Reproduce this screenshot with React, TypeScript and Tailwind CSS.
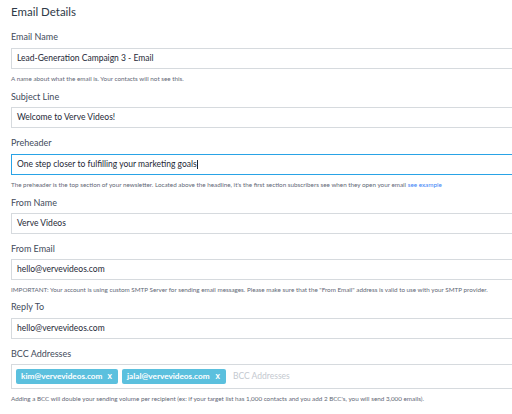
import React from "react";

const font = { fontFamily: "Lato, 'Open Sans', sans-serif" };

function Label({ children }: { children: React.ReactNode }) {
  return <div className="h-[12px] leading-[12px] text-[9px] text-[#3f4b5b] mb-[4.5px]">{children}</div>;
}

function Input({ value, active }: { value: string; active?: boolean }) {
  return (
    <div
      className={
        "h-[21px] w-[540px] flex items-center pl-[5px] text-[8.5px] text-[#1e2836] bg-white " +
        (active ? "border-[1.5px] border-[#29a3e6]" : "border border-[#d6dade]")
      }
    >
      {value}
      {active ? <span className="inline-block w-px h-[9px] bg-[#1e2836] ml-[0.5px]" /> : null}
    </div>
  );
}

function Help({ children }: { children: React.ReactNode }) {
  return <div className="mt-[6px] h-[8px] leading-[8px] text-[6.3px] text-[#5f6876] whitespace-nowrap">{children}</div>;
}

function Tag({ text, w }: { text: string; w: string }) {
  return (
    <div className={"h-[15px] flex items-center justify-between whitespace-nowrap rounded-[2px] bg-[#5bc0de] text-white font-bold text-[8.2px] pl-[5px] pr-[6px] " + w}>
      <span>{text}</span>
      <span className="text-[8.5px]">x</span>
    </div>
  );
}

export default function App() {
  return (
    <div className="w-[512px] h-[414px] overflow-hidden bg-white" style={font}>
      <div className="pl-[11px] pt-[4px]">
        <div className="h-[16px] leading-[16px] text-[11.5px] text-[#2f3a48]">Email Details</div>

        <div className="mt-[11px]">
          <Label>Email Name</Label>
          <Input value="Lead-Generation Campaign 3 - Email" />
          <Help>A name about what the email is. Your contacts will not see this.</Help>
        </div>

        <div className="mt-[8px]">
          <Label>Subject Line</Label>
          <Input value="Welcome to Verve Videos!" />
        </div>

        <div className="mt-[9px]">
          <Label>Preheader</Label>
          <Input value="One step closer to fulfilling your marketing goals" active />
          <Help>
            The preheader is the top section of your newsletter. Located above the headline, it's the first section subscribers see when they open your email{" "}
            <span className="text-[#3b82f6]">see example</span>
          </Help>
        </div>

        <div className="mt-[8px]">
          <Label>From Name</Label>
          <Input value="Verve Videos" />
        </div>

        <div className="mt-[8.5px]">
          <Label>From Email</Label>
          <Input value="hello@vervevideos.com" />
          <Help>
            IMPORTANT: Your account is using custom SMTP Server for sending email messages. Please make sure that the "From Email" address is valid to use with your SMTP provider.
          </Help>
        </div>

        <div className="mt-[7px]">
          <Label>Reply To</Label>
          <Input value="hello@vervevideos.com" />
        </div>

        <div className="mt-[9px]">
          <Label>BCC Addresses</Label>
          <div className="h-[24.5px] w-[540px] border border-[#d6dade] flex items-center pl-[4px] gap-[4px]">
            <Tag text="kim@vervevideos.com" w="w-[102px]" />
            <Tag text="jalal@vervevideos.com" w="w-[104px]" />
            <span className="ml-[3px] text-[8.5px] text-[#c4c9cf]">BCC Addresses</span>
          </div>
          <Help>
            Adding a BCC will double your sending volume per recipient (ex: if your target list has 1,000 contacts and you add 2 BCC's, you will send 3,000 emails).
          </Help>
        </div>
      </div>
    </div>
  );
}
